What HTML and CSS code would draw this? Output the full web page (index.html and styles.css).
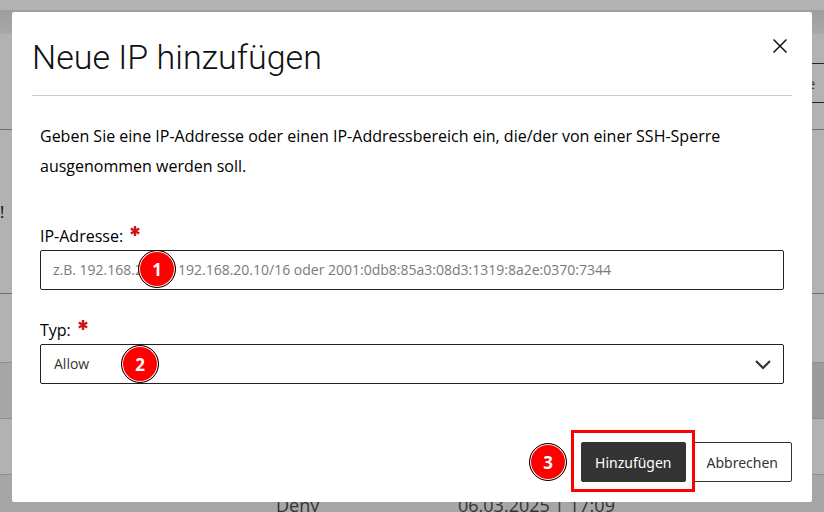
FILE: index.html
```html
<!DOCTYPE html>
<html lang="de">
<head>
    <meta charset="UTF-8">
    <meta name="viewport" content="width=device-width, initial-scale=1.0">
    <title>Neue IP hinzufügen</title>
    <link rel="stylesheet" href="styles.css">
</head>
<body>

    <!-- Page behind the dialog -->
    <div class="page" inert>
        <div class="topbar"></div>
        <div class="subnav"></div>
        <div class="toolbar">
            <button class="toolbar-button" type="button">e</button>
        </div>
        <div class="notice">!</div>
        <div class="table-head"></div>
        <table class="rules">
            <tbody>
                <tr class="odd"><td></td><td></td><td></td><td class="active"></td></tr>
                <tr><td></td><td></td><td></td><td></td></tr>
                <tr class="odd"><td></td><td>Deny</td><td>06.03.2025 | 17:09</td><td></td></tr>
            </tbody>
        </table>
    </div>

    <!-- Modal -->
    <div class="modal" role="dialog" aria-modal="true" aria-labelledby="modalTitle">
        <form class="modal-content">
            <div class="modal-header">
                <h1 id="modalTitle">Neue IP hinzufügen</h1>
                <button class="close" type="button" aria-label="Schließen">
                    <svg width="14" height="14" viewBox="0 0 14 14" fill="none" stroke="#111" stroke-width="1.5">
                        <path d="M0.5 0.5 13.5 13.5M13.5 0.5 0.5 13.5"/>
                    </svg>
                </button>
            </div>

            <div class="modal-body">
                <p>Geben Sie eine IP-Addresse oder einen IP-Addressbereich ein, die/der von einer SSH-Sperre ausgenommen werden soll.</p>

                <div class="field">
                    <label for="ipAddress">IP-Adresse: <span class="required"><svg width="10" height="10" viewBox="0 0 10 10" stroke="#d0121b" stroke-width="2.4"><path d="M5 0V10M0.8 2.5 9.2 7.5M9.2 2.5 0.8 7.5"/></svg></span></label>
                    <input type="text" id="ipAddress" placeholder="z.B. 192.168.20.10, 192.168.20.10/16 oder 2001:0db8:85a3:08d3:1319:8a2e:0370:7344">
                    <span class="step step-ip">1</span>
                </div>

                <div class="field">
                    <label for="ruleType">Typ: <span class="required"><svg width="10" height="10" viewBox="0 0 10 10" stroke="#d0121b" stroke-width="2.4"><path d="M5 0V10M0.8 2.5 9.2 7.5M9.2 2.5 0.8 7.5"/></svg></span></label>
                    <select id="ruleType">
                        <option>Allow</option>
                        <option>Deny</option>
                    </select>
                    <svg class="chevron" width="16" height="10" viewBox="0 0 16 10" fill="none" stroke="#333" stroke-width="2.2">
                        <path d="M1 1 8 8 15 1"/>
                    </svg>
                    <span class="step step-type">2</span>
                </div>
            </div>

            <div class="modal-buttons">
                <span class="step">3</span>
                <div class="highlight">
                    <button class="primary" type="submit">Hinzufügen</button>
                </div>
                <button class="cancel" type="button">Abbrechen</button>
            </div>
        </form>
    </div>

</body>
</html>
```
FILE: styles.css
```css
* {
    box-sizing: border-box;
}

body {
    font-family: 'Open Sans', 'Noto Sans', sans-serif;
    font-size: 16px;
    color: #000;
    background-color: #b2b2b2;
    margin: 0;
    height: 100vh;
    overflow: hidden;
}

/* Page behind the dialog */
.topbar {
    height: 10px;
}

.subnav {
    height: 24px;
    background: linear-gradient(#9e9e9e, #a8a8a8);
}

.toolbar {
    display: flex;
    justify-content: flex-end;
    height: 96px;
    padding-top: 29px;
    border-bottom: 1px solid #707070;
}

.toolbar-button {
    width: 120px;
    height: 40px;
    margin-right: -4px;
    padding: 0 12px;
    border: 1px solid #222;
    background: none;
    color: #333;
    font: inherit;
    font-size: 14px;
    text-align: right;
}

.notice {
    height: 164px;
    padding-top: 70px;
    line-height: 24px;
    border-bottom: 1px solid #707070;
}

.table-head {
    height: 68px;
}

.rules {
    width: 100%;
    table-layout: fixed;
    border-collapse: collapse;
    font-size: 18px;
    color: #333;
}

.rules td {
    height: 56px;
    padding: 4px 0 0;
    border-top: 1px solid #8e8e8e;
}

.rules td:nth-child(1) {
    width: 276px;
}

.rules td:nth-child(2) {
    width: 182px;
}

.rules td:nth-child(4) {
    width: 60px;
}

.rules .odd {
    background-color: #a6a6a6;
}

.rules .active {
    background-color: #9b9b9b;
}

/* Modal */
.modal {
    position: fixed;
    top: 0;
    left: 0;
    width: 100%;
    padding: 12px;
}

.modal-content {
    padding: 0 20px 20px;
    background-color: #fff;
    border-radius: 2px;
}

.modal-header {
    display: flex;
    justify-content: space-between;
    align-items: flex-start;
    height: 84px;
    padding-top: 22px;
    border-bottom: 1px solid #ccc;
}

.modal-header h1 {
    margin: 0;
    font-family: Roboto, sans-serif;
    font-size: 34px;
    font-weight: 300;
    line-height: 46px;
    color: #111;
}

.close {
    display: flex;
    padding: 5px;
    border: none;
    background: none;
    cursor: pointer;
}

.modal-body {
    padding: 25px 8px 0;
}

.modal-body p {
    margin: 0 0 45px;
    line-height: 30px;
}

.field {
    position: relative;
    margin-bottom: 30px;
}

.field label {
    display: flex;
    line-height: 24px;
    margin-top: -4px;
    height: 28px;
    padding-top: 2px;
}

.required {
    display: flex;
    margin: 2px 0 0 7px;
}

.field input,
.field select {
    display: block;
    width: 100%;
    height: 40px;
    padding: 0 12px 2px;
    border: 1px solid #212121;
    border-radius: 2px;
    background-color: #fff;
    color: #333;
    font-family: inherit;
    font-size: 14px;
    appearance: none;
}

.field select {
    padding-left: 13px;
}

.field input::placeholder {
    color: #757b80;
}

.chevron {
    position: absolute;
    right: 13px;
    bottom: 14px;
    pointer-events: none;
}

/* Numbered markers */
.step {
    display: flex;
    justify-content: center;
    align-items: center;
    width: 38px;
    height: 38px;
    border: 1px solid #000;
    border-radius: 50%;
    background-color: #f00;
    box-shadow: inset 0 0 0 1px #fff;
    color: #fff;
    font-size: 17px;
    font-weight: 700;
}

.step-ip {
    position: absolute;
    left: 98px;
    bottom: 2px;
}

.step-type {
    position: absolute;
    left: 81px;
    bottom: 1px;
}

.modal-buttons {
    display: flex;
    justify-content: flex-end;
    align-items: center;
    margin-top: 58px;
}

.modal-buttons button {
    height: 40px;
    padding: 0 13px;
    border: 1px solid #333;
    border-radius: 2px;
    background-color: #fff;
    color: #333;
    font-family: 'Noto Sans', sans-serif;
    font-size: 14px;
    cursor: pointer;
}

.modal-buttons .primary {
    background-color: #333;
    color: #fff;
}

.highlight {
    position: relative;
    z-index: 1;
    margin: -12px -2px -10px 4px;
    padding: 9px 6px 7px 7px;
    border: 3px solid #f00;
    background-color: #fff;
}
```
